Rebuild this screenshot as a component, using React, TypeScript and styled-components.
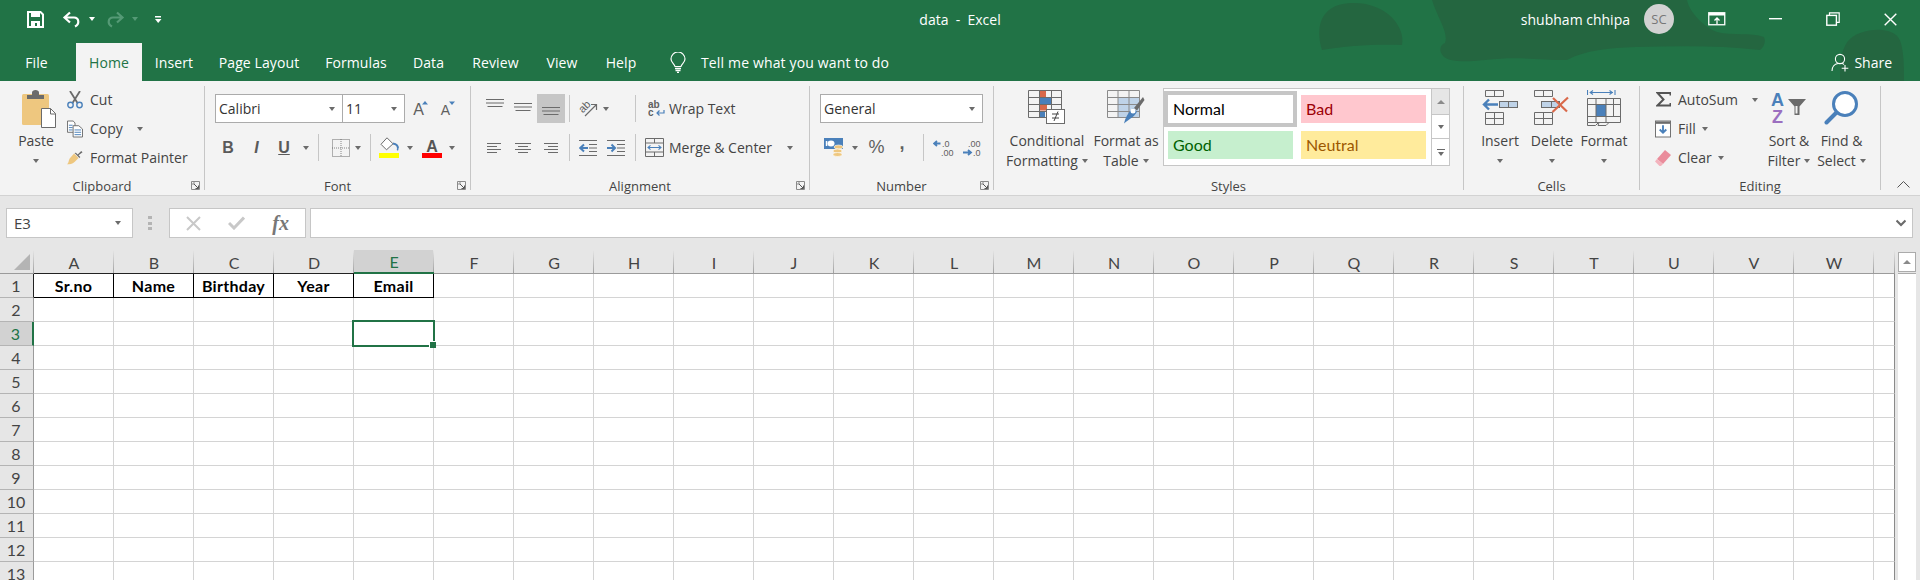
import React from 'react';
import styled, { createGlobalStyle } from 'styled-components';

const GlobalStyle = createGlobalStyle`
    html, body {
        margin: 0;
        padding: 0;
        height: 580px;
        overflow: hidden;
        background: #fff;
        font-family: "Open Sans", "Liberation Sans", sans-serif;
    }
    * { box-sizing: border-box; }
`

const GRAY = '#6b6b6b'
const BLUE = '#4a80ba'
const LIGHTBLUE = '#bfd3e8'
const TAN = '#eec77f'
const RED = '#d9694a'

const SaveIcon = () => (
    <svg width="17" height="17" viewBox="0 0 17 17">
        <path d="M1 1h12.5L16 3.5V16H1z" fill="none" stroke="#fff" strokeWidth="2" />
        <rect x="4" y="1" width="9" height="5" fill="#fff" />
        <path d="M4 16v-6h9v6h-3v-4H8v4z" fill="#fff" />
    </svg>
)
const UndoIcon = ({ color = '#fff', flip = false }: { color?: string; flip?: boolean }) => (
    <svg width="19" height="17" viewBox="0 0 19 17" style={flip ? { transform: 'scaleX(-1)' } : undefined}>
        <path d="M8 1.5L2.5 6.5 8 11.5M3 6.5h9c5 0 6 6.5 1 9" fill="none" stroke={color} strokeWidth="2.2" />
    </svg>
)
const QatIcon = () => (
    <svg width="7" height="9" viewBox="0 0 7 9">
        <rect width="6" height="1.5" y="1" fill="#fff" />
        <path d="M0 4h6.5L3.2 8z" fill="#fff" />
    </svg>
)
const DisplayIcon = () => (
    <svg width="18" height="14" viewBox="0 0 18 14">
        <rect x=".75" y=".75" width="16" height="12" fill="none" stroke="#fff" strokeWidth="1.3" />
        <rect x="1" y="1" width="16" height="2.5" fill="#fff" />
        <path d="M9 12V6M6.5 8.5L9 6l2.500 2.500" fill="none" stroke="#fff" strokeWidth="1.3" />
    </svg>
)
const MinIcon = () => (
    <svg width="13" height="2" viewBox="0 0 13 2"><rect width="13" height="1.4" fill="#fff" /></svg>
)
const RestoreIcon = () => (
    <svg width="14" height="14" viewBox="0 0 14 14">
        <path d="M3.500 3V.8h9.700v9.600H11" fill="none" stroke="#fff" strokeWidth="1.2" />
        <rect x=".8" y="3.400" width="9.600" height="9.800" fill="none" stroke="#fff" strokeWidth="1.4" />
    </svg>
)
const CloseIcon = () => (
    <svg width="13" height="13" viewBox="0 0 13 13">
        <path d="M.7.700l11.600 11.600M12.300.7L.7 12.300" stroke="#fff" strokeWidth="1.4" />
    </svg>
)
const BulbIcon = () => (
    <svg width="16" height="21" viewBox="0 0 16 21">
        <path d="M5 14.500C4.500 12 1 10.500 1 7a7 7 0 0 1 14 0c0 3.500-3.500 5-4 7.500z" fill="none" stroke="#fff" strokeWidth="1.2" />
        <path d="M5 16.500h6M5.500 18.500h5M7 20.300h2" stroke="#fff" strokeWidth="1.300" />
    </svg>
)
const ShareIcon = () => (
    <svg width="19" height="19" viewBox="0 0 19 19">
        <circle cx="9" cy="6" r="4.600" fill="none" stroke="#fff" strokeWidth="1.100" />
        <path d="M1 18c0-4 2.500-7 6-7.500M11 10.500c.8.200 1.500.5 2 1" fill="none" stroke="#fff" strokeWidth="1.100" />
        <path d="M14 12v6.500M10.700 15.300h6.600" stroke="#fff" strokeWidth="1.100" />
    </svg>
)
const PasteIcon = () => (
    <svg width="34" height="38" viewBox="0 0 34 38">
        <rect x="0" y="4" width="27" height="31" rx="1.500" fill={TAN} />
        <path d="M5 9V5h5V2.500C10 1 11.500 0 13.500 0S17 1 17 2.500V5h5v4z" fill={GRAY} />
        <path d="M19.500 18.500h9l5 5v14h-14z" fill="#fff" stroke={GRAY} strokeWidth="1" />
        <path d="M28.500 18.500V24H33.500" fill="none" stroke={GRAY} />
    </svg>
)
const CutIcon = () => (
    <svg width="16" height="18" viewBox="0 0 16 18">
        <path d="M3 0l7.500 12M13 0L5.500 12" stroke={GRAY} strokeWidth="1.800" />
        <circle cx="3.500" cy="14" r="2.700" fill="none" stroke={BLUE} strokeWidth="1.400" />
        <circle cx="12.500" cy="14" r="2.700" fill="none" stroke={BLUE} strokeWidth="1.400" />
    </svg>
)
const CopyIcon = () => (
    <svg width="17" height="18" viewBox="0 0 17 18">
        <path d="M.5.500h6l2 2v10H.5z" fill="#fff" stroke={GRAY} />
        <path d="M2 5h4M2 7.500h4M2 10h4" stroke={BLUE} />
        <path d="M6.500 5.500h6l4 3.500v8.500h-10z" fill="#fff" stroke={GRAY} />
        <path d="M8 10h7M8 12.500h7M8 15h7" stroke={BLUE} />
    </svg>
)
const BrushIcon = () => (
    <svg width="18" height="16" viewBox="0 0 18 16">
        <path d="M8 3l5 5-4.500 4.500C6 15 3 15 0 15c2-1 1.500-4 3-6.500z" fill={TAN} />
        <path d="M8.500 2.500l5.500 5.500 1-1-2-2.200L17.500 1.500 16 0l-4 4-2-2z" fill={GRAY} />
    </svg>
)
const BorderIcon = () => (
    <svg width="18" height="18" viewBox="0 0 18 18">
        <rect x=".5" y=".5" width="17" height="17" fill="none" stroke={GRAY} strokeDasharray="1 1" />
        <path d="M9 0v18M0 9h18" stroke={GRAY} strokeDasharray="1 1" opacity=".8" />
    </svg>
)
const FillIcon = () => (
    <svg width="21" height="21" viewBox="0 0 21 21">
        <path d="M8 .8l-6 6.500 5.500 5.500 6.500-6z" fill="#fff" stroke={GRAY} />
        <path d="M14 6.500c3 .5 5 2 5 5" fill="none" stroke={BLUE} strokeWidth="2" />
        <path d="M18.500 10.500c1 1.200 1.200 2.500.500 3-1 .3-1.500-.8-1-2z" fill={BLUE} />
        <rect y="16" width="20" height="5" fill="#ffff00" />
    </svg>
)
const FontColorIcon = () => (
    <svg width="20" height="21" viewBox="0 0 20 21">
        <text x="10" y="15" textAnchor="middle" fontFamily="Liberation Sans, sans-serif" fontWeight="700" fontSize="16" fill="#555">A</text>
        <rect y="16" width="20" height="5" fill="#ff0000" />
    </svg>
)
const GrowFontIcon = ({ up }: { up: boolean }) => (
    <svg width="16" height="20" viewBox="0 0 16 20">
        <text x="6.500" y="16" textAnchor="middle" fontFamily="Liberation Sans, sans-serif" fontSize={up ? 16 : 14} fill="#5f5f5f">A</text>
        <path d={up ? 'M10 5.500L13 2l3 3.500z' : 'M10 2.500h6l-3 3.500z'} fill={BLUE} />
    </svg>
)
const AlignV = ({ top }: { top: number }) => (
    <svg width="18" height="24" viewBox="0 0 18 24">
        <path d={`M0 ${top}h18M0 ${top + 3.5}h18M1.500 ${top + 7}h15`} stroke={GRAY} strokeWidth="1" />
    </svg>
)
const AlignH = ({ mode }: { mode: 'l' | 'c' | 'r' }) => {
    const s = mode === 'l' ? ['M0 1.500h14', 'M0 4.500h10', 'M0 7.500h14', 'M0 10.500h10'] : mode === 'c' ? ['M0 1.500h16', 'M3 4.500h10', 'M0 7.500h16', 'M3 10.500h10'] : ['M1 1.500h14', 'M5 4.500h10', 'M1 7.500h14', 'M5 10.500h10']
    return (
        <svg width="16" height="12" viewBox="0 0 16 12"><path d={s.join('')} stroke={GRAY} /></svg>
    )
}
const OrientIcon = () => (
    <svg width="20" height="20" viewBox="0 0 20 20">
        <text x="7" y="11" fontFamily="Liberation Sans, sans-serif" fontSize="11" fill="#5f5f5f" transform="rotate(-45 7 8)" textAnchor="middle">ab</text>
        <path d="M7 17L18 6M13 5.500h5.500V11" fill="none" stroke={GRAY} strokeWidth="1.200" />
    </svg>
)
const IndentIcon = ({ flip }: { flip: boolean }) => (
    <svg width="18" height="16" viewBox="0 0 18 16">
        <path d="M0 .5h18M10 4.500h8M10 8h8M10 11.500h8M0 15.500h18" stroke={GRAY} />
        <path d={flip ? 'M9 8H1M5 4.500L1.200 8 5 11.500' : 'M0 8h8M4.500 4.500L8 8l-3.500 3.500'} fill="none" stroke={BLUE} strokeWidth="2" />
    </svg>
)
const WrapIcon = () => (
    <svg width="17" height="20" viewBox="0 0 17 20">
        <text x="0" y="9" fontFamily="Liberation Sans, sans-serif" fontSize="10" fontWeight="700" fill="#5f5f5f">ab</text>
        <text x="0" y="17" fontFamily="Liberation Sans, sans-serif" fontSize="10" fontWeight="700" fill="#5f5f5f">c</text>
        <path d="M16 11v3H9M11.500 11.500L9 14l2.500 2.500" fill="none" stroke={BLUE} strokeWidth="1.200" />
    </svg>
)
const MergeIcon = () => (
    <svg width="19" height="19" viewBox="0 0 19 19">
        <path d="M.5.500h18v18H.5zM.5 5h18M.5 14h18M9.500.5V5M9.500 14v4.500" fill="none" stroke={GRAY} />
        <path d="M3 9.500h13M5.500 7.300L3 9.500l2.500 2.200M13.500 7.300l2.500 2.200-2.500 2.200" fill="none" stroke={BLUE} strokeWidth="1.100" />
    </svg>
)
const AccountingIcon = () => (
    <svg width="20" height="19" viewBox="0 0 20 19">
        <rect y="0" width="19" height="11" fill={BLUE} />
        <ellipse cx="7" cy="5.500" rx="3.500" ry="3" fill="#fff" />
        <rect x="1.800" y="3" width="1.500" height="5" fill="#fff" />
        <ellipse cx="14.500" cy="9" rx="4.500" ry="2" fill={TAN} stroke="#fff" strokeWidth=".6" />
        <ellipse cx="13.500" cy="13" rx="4.500" ry="2" fill={TAN} stroke="#fff" strokeWidth=".6" />
        <ellipse cx="13.500" cy="16.500" rx="4.500" ry="2" fill={TAN} stroke="#fff" strokeWidth=".6" />
    </svg>
)
const DecimalIcon = ({ more }: { more: boolean }) => (
    <svg width="23" height="20" viewBox="0 0 23 20" fontFamily="Liberation Sans, sans-serif" fontSize="9" fill="#5f5f5f">
        {more ? (
            <>
                <text x="9" y="8.500">.0</text>
                <text x="8" y="17.500">.00</text>
                <path d="M7.500 5.500H1.500M4 3L1 5.500 4 8" fill="none" stroke={BLUE} strokeWidth="1.800" />
            </>
        ) : (
            <>
                <text x="7" y="8.500">.00</text>
                <text x="12" y="17.500">.0</text>
                <path d="M2 14.500h8M7 12l3 2.500-3 2.500" fill="none" stroke={BLUE} strokeWidth="1.800" />
            </>
        )}
    </svg>
)
const CondIcon = () => (
    <svg width="38" height="34" viewBox="0 0 38 34">
        <rect x="11" y="1" width="7" height="6" fill={RED} />
        <rect x="11" y="8" width="12" height="6" fill={BLUE} />
        <rect x="11" y="15" width="8" height="5.500" fill={RED} />
        <rect x="11" y="22" width="6" height="5" fill={BLUE} />
        <path d="M.5.500h33v27H.5zM.5 7.500h33M.5 14.500h33M.5 21.500h33M11.500.5v27M23.500.5v27" fill="none" stroke={GRAY} strokeWidth="1" />
        <rect x="18.500" y="19.500" width="18" height="14" fill="#fff" stroke={GRAY} />
        <path d="M24 24h7M24 28h7M30 21.500l-4 9.500" stroke="#444" fill="none" />
    </svg>
)
const FmtTableIcon = () => (
    <svg width="38" height="34" viewBox="0 0 38 34">
        <rect x="11" y="7" width="22" height="21" fill={LIGHTBLUE} />
        <path d="M.5.500h32v27H.5zM.5 7.500h32M.5 14.500h32M.5 21.500h32M11 .5v27M22 .5v27" fill="none" stroke="#8a8a8a" />
        <path d="M36 7L27 18l3 2.500L37.500 10z" fill={GRAY} />
        <path d="M26 18l4 3.500c-2 5-7 7-13 12 1-5 4-11 9-15.500z" fill={BLUE} />
        <circle cx="26" cy="21" r="2.500" fill="#fff" />
    </svg>
)
const InsertIcon = () => (
    <svg width="37" height="36" viewBox="0 0 37 36">
        <path d="M3.500.5h18v6h-18zM12.500.5v6M3.500 22.500h18v12h-18zM3.500 28.500h18M12.500 22.500v12" fill="none" stroke={GRAY} />
        <rect x="17.500" y="11.500" width="18" height="6" fill={LIGHTBLUE} stroke={GRAY} />
        <path d="M26.500 11.500v6" stroke={GRAY} />
        <path d="M16 14.500H2M7 9.500l-5 5 5 5" fill="none" stroke={BLUE} strokeWidth="2.400" />
    </svg>
)
const DeleteIcon = () => (
    <svg width="37" height="36" viewBox="0 0 37 36">
        <path d="M.5.500h18v6H.5zM9.500.5v6M.5 22.500h18v12H.5zM.5 28.500h18M9.500 22.500v12" fill="none" stroke={GRAY} />
        <rect x="7.500" y="11.500" width="18" height="6" fill={LIGHTBLUE} stroke={GRAY} />
        <path d="M17.500 11.500v6" stroke={GRAY} />
        <path d="M19 8l14 13.500M34 7.500L18.500 22" stroke={RED} strokeWidth="2.200" />
    </svg>
)
const FormatCellIcon = () => (
    <svg width="35" height="38" viewBox="0 0 35 38">
        <path d="M.5 0v5M28 0v5M3 2.500h23M6 .5l-2.800 2 2.800 2M22.500.5l2.800 2-2.800 2" fill="none" stroke={BLUE} strokeWidth="1.100" />
        <rect x="9" y="15" width="10" height="11" fill={BLUE} />
        <path d="M.5 8.500h33v24H.5zM.5 14.500h33M.5 26.500h33M9 8.500v24M19 8.500v24M26.500 8.500v18" fill="none" stroke={GRAY} />
        <path d="M.5 32.500v3h8l3-3M12 32.500l-1 3h8l3-3" fill="none" stroke={GRAY} />
    </svg>
)
const SigmaIcon = () => (
    <svg width="15" height="15" viewBox="0 0 15 15">
        <path d="M14.500 3.500V1H1.500l6 6.500-6 6h13v-2.500" fill="none" stroke="#555" strokeWidth="2" />
    </svg>
)
const FillDownIcon = () => (
    <svg width="17" height="18" viewBox="0 0 17 18">
        <rect x=".5" y=".5" width="16" height="17" fill="#fff" stroke={GRAY} />
        <rect x="1" y="1" width="15" height="2.500" fill={GRAY} />
        <path d="M8.500 5v8M5 9.500l3.500 3.500L12 9.500" fill="none" stroke={BLUE} strokeWidth="2" />
    </svg>
)
const EraserIcon = () => (
    <svg width="16" height="16" viewBox="0 0 16 16">
        <path d="M10 0l6 5-8 9-6-5z" fill="#ea8c9b" />
        <path d="M2 9l6 5-2 2-1.500 0L0 11.500z" fill="#f3b3bd" />
    </svg>
)
const SortIcon = () => (
    <svg width="36" height="37" viewBox="0 0 36 37" fontFamily="Liberation Sans, sans-serif" fontWeight="700" fontSize="18">
        <text x="0" y="16.300" fill={BLUE}>A</text>
        <text x="1" y="33" fill="#9b6fc0">Z</text>
        <path d="M17 9h18l-6.500 7.500V25h-5v-8.500z" fill={GRAY} />
        <path d="M24.500 16v7.500h2V16z" fill="#f3f3f3" />
    </svg>
)
const FindIcon = () => (
    <svg width="35" height="35" viewBox="0 0 35 35">
        <circle cx="21" cy="14" r="11.500" fill="#fff" stroke={BLUE} strokeWidth="3" />
        <path d="M12.500 22.500L2.500 32.500" stroke={BLUE} strokeWidth="4" strokeLinecap="round" />
    </svg>
)
const LauncherIcon = () => (
    <svg width="9" height="9" viewBox="0 0 9 9">
        <path d="M.5 8.500V.5h8v8zM.5 3h2.500M3 .5V3" fill="none" stroke="#8a8a8a" />
        <path d="M3 3l4.500 4.500M7.500 4.500v3h-3" fill="none" stroke="#555" />
    </svg>
)
const XIcon = () => (
    <svg width="15" height="15" viewBox="0 0 15 15"><path d="M1 1l13 13M14 1L1 14" stroke="#c8c8c8" strokeWidth="2" /></svg>
)
const CheckIcon = () => (
    <svg width="17" height="14" viewBox="0 0 17 14"><path d="M1 7l5 5L16 1.500" fill="none" stroke="#c8c8c8" strokeWidth="3" /></svg>
)
const ChevronIcon = ({ up, color = GRAY }: { up?: boolean; color?: string }) => (
    <svg width={up ? 13 : 10} height="8" viewBox={up ? '0 0 13 8' : '0 0 10 8'}>
        <path d={up ? 'M.5 7.500l6-6 6 6' : 'M.5 1.500L5 6l4.500-4.500'} fill="none" stroke={color} strokeWidth={up ? 1 : 2.200} />
    </svg>
)
const CornerIcon = () => (
    <svg width="16" height="16" viewBox="0 0 16 16"><path d="M16 0v16H0z" fill="#b4b4b4" /></svg>
)

const TitleBlobs = () => (
    <BlobLayer width="720" height="81" viewBox="0 0 720 81">
        <path d="M122 50c-6-20-4-45 28-47 36-2 56 24 52 42-22-1-54 0-80 5z" fill="#246640" />
        <path d="M232 0h255c2 12 18 28 30 32 16 4 34 0 47 5 2 5 0 10-4 13-42-5-82-4-124-3-28 1-50 3-69 13-28 0-50-4-82 0-20 2-34 2-41-3-6-6-4-12 1-14 4-10-8-26-13-43z" fill="#246640" />
        <path d="M640 81c0-14 0-30 8-40 10-12 40-16 50-4 6 8 6 30 6 44z" fill="#246640" />
    </BlobLayer>
)

const Caret = () => <CaretShape />

const SmallButton = ({ icon, label, w, caretGap }: { icon: React.ReactNode; label: string; w: number; caretGap?: number }) => (
    <SmallRow>
        <Slot $w={w}>{icon}</Slot>
        <SmallLabel>{label}</SmallLabel>
        {caretGap !== undefined && <Slot $w={8} $ml={caretGap}><Caret /></Slot>}
    </SmallRow>
)

const BigButton = ({ w, icon, lines, dx = 0 }: { w: number; icon: React.ReactNode; lines: [string, string?]; dx?: number }) => (
    <BigWrap $w={w}>
        <BigIcon $dx={dx}>{icon}</BigIcon>
        <BigLine>{lines[0]}</BigLine>
        <BigLine>
            {lines[1]}
            <BigCaret $gap={lines[1] ? 4 : 0}><Caret /></BigCaret>
        </BigLine>
    </BigWrap>
)

const Group = ({ w, label, launcher, children }: { w: number; label: string; launcher?: boolean; children: React.ReactNode }) => (
    <GroupBox $w={w}>
        <GroupBody>{children}</GroupBody>
        <GroupFooter>
            {label}
            {launcher && <Launcher><LauncherIcon /></Launcher>}
        </GroupFooter>
    </GroupBox>
)

const COLS = 'ABCDEFGHIJKLMNOPQRSTUVW'.split('')
const HEADERS = ['Sr.no', 'Name', 'Birthday', 'Year', 'Email']
const ROWS = Array.from({ length: 13 }, (_, i) => i + 1)

const App = () => {
    return (
        <Page>
            <GlobalStyle />
            <TopGreen>
                <TitleBlobs />
                <TitleBar>
                    <Qat>
                        <Slot $w={17}><SaveIcon /></Slot>
                        <Slot $w={19} $ml={18}><UndoIcon /></Slot>
                        <Slot $w={8} $ml={7}><CaretShape $white /></Slot>
                        <Slot $w={19} $ml={10}><UndoIcon color="#559a76" flip /></Slot>
                        <Slot $w={8} $ml={6}><CaretShape $faded /></Slot>
                        <Slot $w={7} $ml={16}><QatIcon /></Slot>
                    </Qat>
                    <WindowTitle>data&nbsp; -&nbsp; Excel</WindowTitle>
                    <TitleRight>
                        <UserName>shubham chhipa</UserName>
                        <Avatar>SC</Avatar>
                        <Slot $w={18} $ml={34}><DisplayIcon /></Slot>
                        <Slot $w={13} $ml={43}><MinIcon /></Slot>
                        <Slot $w={14} $ml={44}><RestoreIcon /></Slot>
                        <Slot $w={13} $ml={44}><CloseIcon /></Slot>
                    </TitleRight>
                </TitleBar>
                <TabBar>
                    <Tabs>
                        <Tab $w={76} $pr={3}>File</Tab>
                        <Tab $w={66} $active>Home</Tab>
                        <Tab $w={64}>Insert</Tab>
                        <Tab $w={106}>Page Layout</Tab>
                        <Tab $w={88}>Formulas</Tab>
                        <Tab $w={57}>Data</Tab>
                        <Tab $w={77}>Review</Tab>
                        <Tab $w={56}>View</Tab>
                        <Tab $w={62}>Help</Tab>
                        <TellMe>
                            <BulbIcon />
                            <span>Tell me what you want to do</span>
                        </TellMe>
                    </Tabs>
                    <Share>
                        <ShareIcon />
                        <span>Share</span>
                    </Share>
                </TabBar>
            </TopGreen>

            <Ribbon>
                <Group w={205} label="Clipboard" launcher>
                    <Split>
                        <BigButton w={62} dx={5} icon={<PasteIcon />} lines={['Paste']} />
                        <SmallColumn $w={138}>
                            <SmallButton w={16} icon={<CutIcon />} label="Cut" />
                            <SmallButton w={16} icon={<CopyIcon />} label="Copy" caretGap={13} />
                            <SmallButton w={16} icon={<BrushIcon />} label="Format Painter" />
                        </SmallColumn>
                    </Split>
                </Group>

                <Group w={266} label="Font" launcher>
                    <ToolRows>
                        <ToolRow $pl={10}>
                            <ComboBox $w={128}><ComboText>Calibri</ComboText><Caret /></ComboBox>
                            <ComboBox $w={63} $ml={-1}><ComboText>11</ComboText><Caret /></ComboBox>
                            <Slot $w={16} $ml={7}><GrowFontIcon up /></Slot>
                            <Slot $w={16} $ml={11}><GrowFontIcon up={false} /></Slot>
                        </ToolRow>
                        <ToolRow $pl={9}>
                            <Slot $w={28}><Letter>B</Letter></Slot>
                            <Slot $w={29}><Letter $italic>I</Letter></Slot>
                            <Slot $w={26}><Letter $under>U</Letter></Slot>
                            <Slot $w={18}><Caret /></Slot>
                            <Sep $ml={3} />
                            <Slot $w={18} $ml={13}><BorderIcon /></Slot>
                            <Slot $w={8} $ml={4}><Caret /></Slot>
                            <Sep $ml={8} />
                            <Slot $w={21} $ml={8}><FillIcon /></Slot>
                            <Slot $w={8} $ml={6}><Caret /></Slot>
                            <Slot $w={20} $ml={8}><FontColorIcon /></Slot>
                            <Slot $w={8} $ml={6}><Caret /></Slot>
                        </ToolRow>
                    </ToolRows>
                </Group>

                <Group w={339} label="Alignment" launcher>
                    <ToolRows>
                        <ToolRow $pl={10}>
                            <Slot $w={28}><AlignV top={2.5} /></Slot>
                            <Slot $w={28}><AlignV top={6.5} /></Slot>
                            <Slot $w={28} $active><AlignV top={10.5} /></Slot>
                            <Sep $ml={4} />
                            <Slot $w={20} $ml={8}><OrientIcon /></Slot>
                            <Slot $w={8} $ml={4}><Caret /></Slot>
                            <Sep $ml={25} />
                            <Slot $w={17} $ml={12}><WrapIcon /></Slot>
                            <SmallLabel $ml={4}>Wrap Text</SmallLabel>
                        </ToolRow>
                        <ToolRow $pl={10}>
                            <Slot $w={28}><AlignH mode="l" /></Slot>
                            <Slot $w={28}><AlignH mode="c" /></Slot>
                            <Slot $w={28}><AlignH mode="r" /></Slot>
                            <Sep $ml={4} />
                            <Slot $w={18} $ml={9}><IndentIcon flip /></Slot>
                            <Slot $w={18} $ml={10}><IndentIcon flip={false} /></Slot>
                            <Sep $ml={10} />
                            <Slot $w={19} $ml={9}><MergeIcon /></Slot>
                            <SmallLabel $ml={5} $w={106}>Merge &amp; Center</SmallLabel>
                            <Slot $w={8} $ml={11}><Caret /></Slot>
                        </ToolRow>
                    </ToolRows>
                </Group>

                <Group w={184} label="Number" launcher>
                    <ToolRows>
                        <ToolRow $pl={10}>
                            <ComboBox $w={163}><ComboText>General</ComboText><Caret /></ComboBox>
                        </ToolRow>
                        <ToolRow $pl={14}>
                            <Slot $w={20}><AccountingIcon /></Slot>
                            <Slot $w={8} $ml={7}><Caret /></Slot>
                            <Slot $w={15} $ml={10}><Symbol>%</Symbol></Slot>
                            <Slot $w={16} $ml={10}><Symbol $comma>,</Symbol></Slot>
                            <Sep $ml={13} />
                            <Slot $w={23} $ml={9}><DecimalIcon more /></Slot>
                            <Slot $w={23} $ml={5}><DecimalIcon more={false} /></Slot>
                        </ToolRow>
                    </ToolRows>
                </Group>

                <Group w={470} label="Styles">
                    <Split $pl={6}>
                        <BigButton w={94} icon={<CondIcon />} lines={['Conditional', 'Formatting']} />
                        <BigButton w={64} icon={<FmtTableIcon />} lines={['Format as', 'Table']} />
                        <Gallery>
                            <StyleGrid>
                                <StyleCell $bg="#fff" $fg="#000" $selected>Normal</StyleCell>
                                <StyleCell $bg="#ffc7ce" $fg="#9c0006">Bad</StyleCell>
                                <StyleCell $bg="#c6efce" $fg="#006100">Good</StyleCell>
                                <StyleCell $bg="#ffeb9c" $fg="#9c5700">Neutral</StyleCell>
                            </StyleGrid>
                            <GalleryScroll>
                                <GalleryBtn $h={26} $disabled><UpTri /></GalleryBtn>
                                <GalleryBtn $h={24}><Caret /></GalleryBtn>
                                <GalleryBtn $h={26} $more><Caret /></GalleryBtn>
                            </GalleryScroll>
                        </Gallery>
                    </Split>
                </Group>

                <Group w={176} label="Cells">
                    <Split $pl={10}>
                        <BigButton w={52} icon={<InsertIcon />} lines={['Insert']} />
                        <BigButton w={52} icon={<DeleteIcon />} lines={['Delete']} />
                        <BigButton w={52} icon={<FormatCellIcon />} lines={['Format']} />
                    </Split>
                </Group>

                <Group w={241} label="Editing">
                    <Split $pl={15}>
                        <SmallColumn $w={108}>
                            <SmallButton w={16} icon={<SigmaIcon />} label="AutoSum" caretGap={13} />
                            <SmallRow>
                                <Slot $w={16}><FillDownIcon /></Slot>
                                <SmallLabel>Fill</SmallLabel>
                                <Slot $w={8} $ml={5}><Caret /></Slot>
                            </SmallRow>
                            <SmallRow>
                                <Slot $w={16}><EraserIcon /></Slot>
                                <SmallLabel>Clear</SmallLabel>
                                <Slot $w={8} $ml={5}><Caret /></Slot>
                            </SmallRow>
                        </SmallColumn>
                        <BigButton w={52} icon={<SortIcon />} lines={['Sort &', 'Filter']} />
                        <BigButton w={53} icon={<FindIcon />} lines={['Find &', 'Select']} />
                    </Split>
                </Group>
                <Collapse><ChevronIcon up color="#555" /></Collapse>
            </Ribbon>

            <FormulaBar>
                <NameBox><span>E3</span><Caret /></NameBox>
                <Grip><i /><i /><i /></Grip>
                <FormulaButtons>
                    <XIcon />
                    <CheckIcon />
                    <Fx>fx</Fx>
                </FormulaButtons>
                <FormulaInput><ChevronIcon /></FormulaInput>
            </FormulaBar>

            <SheetArea>
                <Grid>
                    <CornerCell><CornerIcon /></CornerCell>
                    {COLS.map((c, i) => (
                        <ColHead key={c} $selected={c === 'E'} $dark={i < 4}>{c}</ColHead>
                    ))}
                    <ColHead />
                    {ROWS.map(r => (
                        <React.Fragment key={r}>
                            <RowHead $selected={r === 3} $dark={r === 1}>{r}</RowHead>
                            {COLS.map((c, i) => (
                                <Cell key={c} $boxed={r === 1 && i < 5}>
                                    {r === 1 && HEADERS[i]}
                                    {r === 3 && c === 'E' && <Selection><Handle /></Selection>}
                                </Cell>
                            ))}
                            <Cell $last />
                        </React.Fragment>
                    ))}
                </Grid>
                <ScrollGutter>
                    <ScrollBar>
                        <ScrollUp><UpTri /></ScrollUp>
                        <ScrollThumb />
                    </ScrollBar>
                </ScrollGutter>
            </SheetArea>
        </Page>
    );
};

export default App;

const Page = styled.div`
    width: 1920px;
    height: 580px;
    overflow: hidden;
    color: #444;
    font-size: 14px;
`
const TopGreen = styled.div`
    position: relative;
    height: 81px;
    background: #217346;
    color: #fff;
`
const BlobLayer = styled.svg`
    position: absolute;
    top: 0;
    right: 0;
`
const TitleBar = styled.div`
    position: relative;
    height: 43px;
    display: grid;
    grid-template-columns: 1fr auto 1fr;
    align-items: center;
    padding-bottom: 5px;
`
const Qat = styled.div`
    display: flex;
    align-items: center;
    padding-left: 27px;
`
const WindowTitle = styled.div`
    font-size: 14px;
`
const TitleRight = styled.div`
    display: flex;
    align-items: center;
    justify-content: flex-end;
    padding-right: 23px;
`
const UserName = styled.div`
    font-size: 14px;
    margin-right: 14px;
`
const Avatar = styled.div`
    width: 30px;
    height: 30px;
    border-radius: 50%;
    background: #d2d2d2;
    color: #777;
    font-size: 13px;
    display: flex;
    align-items: center;
    justify-content: center;
`
const TabBar = styled.div`
    position: relative;
    height: 38px;
    display: flex;
    justify-content: space-between;
`
const Tabs = styled.div`
    display: flex;
`
const Tab = styled.div<{ $w: number; $pr?: number; $active?: boolean }>`
    width: ${p => p.$w}px;
    padding-right: ${p => p.$pr ?? 0}px;
    display: flex;
    align-items: center;
    justify-content: center;
    font-size: 14px;
    letter-spacing: 0.1px;
    background: ${p => (p.$active ? '#f3f3f3' : 'transparent')};
    color: ${p => (p.$active ? '#217346' : '#fff')};
`
const TellMe = styled.div`
    display: flex;
    align-items: center;
    gap: 15px;
    margin-left: 18px;
    font-size: 14px;
    letter-spacing: 0.15px;
`
const Share = styled.div`
    display: flex;
    align-items: center;
    gap: 4px;
    padding-right: 28px;
    font-size: 14px;
`
const Ribbon = styled.div`
    position: relative;
    height: 114px;
    padding-top: 5px;
    display: flex;
    background: #f3f3f3;
`
const GroupBox = styled.div<{ $w: number }>`
    width: ${p => p.$w}px;
    height: 104px;
    border-right: 1px solid #c6c6c6;
    display: flex;
    flex-direction: column;
    flex: none;
`
const GroupBody = styled.div`
    height: 90px;
`
const GroupFooter = styled.div`
    position: relative;
    height: 14px;
    line-height: 20px;
    text-align: center;
    font-size: 13px;
    color: #444;
`
const Launcher = styled.span`
    position: absolute;
    right: 4px;
    top: 5px;
    line-height: 0;
`
const Split = styled.div<{ $pl?: number }>`
    display: flex;
    padding-left: ${p => p.$pl ?? 5}px;
`
const SmallColumn = styled.div<{ $w: number }>`
    width: ${p => p.$w}px;
    margin-top: -1px;
    display: flex;
    flex-direction: column;
`
const SmallRow = styled.div`
    height: 29px;
    display: flex;
    align-items: center;
`
const SmallLabel = styled.span<{ $ml?: number; $w?: number }>`
    margin-left: ${p => p.$ml ?? 7}px;
    ${p => (p.$w ? `width: ${p.$w}px;` : '')}
    font-size: 14px;
    white-space: nowrap;
`
const Slot = styled.span<{ $w: number; $ml?: number; $active?: boolean }>`
    width: ${p => p.$w}px;
    height: 29px;
    margin-left: ${p => p.$ml ?? 0}px;
    flex: none;
    display: flex;
    align-items: center;
    justify-content: center;
    background: ${p => (p.$active ? '#c6c6c6' : 'transparent')};
`
const CaretShape = styled.span<{ $white?: boolean; $faded?: boolean }>`
    display: inline-block;
    width: 0;
    height: 0;
    flex: none;
    border-left: 3.5px solid transparent;
    border-right: 3.5px solid transparent;
    border-top: 4px solid ${p => (p.$white ? '#fff' : p.$faded ? '#559a76' : '#6b6b6b')};
`
const UpTri = styled.span`
    display: inline-block;
    width: 0;
    height: 0;
    border-left: 4px solid transparent;
    border-right: 4px solid transparent;
    border-bottom: 4px solid #8a8a8a;
`
const BigWrap = styled.div<{ $w: number }>`
    width: ${p => p.$w}px;
    flex: none;
    display: flex;
    flex-direction: column;
    align-items: center;
`
const BigIcon = styled.div<{ $dx: number }>`
    height: 45px;
    padding: 4px 0 0 ${p => p.$dx}px;
    display: flex;
    align-items: flex-start;
    justify-content: center;
`
const BigLine = styled.div`
    height: 20px;
    line-height: 20px;
    font-size: 14px;
    white-space: nowrap;
    display: flex;
    align-items: center;
`
const BigCaret = styled.span<{ $gap: number }>`
    display: flex;
    margin-left: ${p => p.$gap}px;
`
const ToolRows = styled.div`
    padding-top: 8px;
    display: flex;
    flex-direction: column;
    gap: 10px;
`
const ToolRow = styled.div<{ $pl: number }>`
    height: 29px;
    padding-left: ${p => p.$pl}px;
    display: flex;
    align-items: center;
`
const ComboBox = styled.div<{ $w: number; $ml?: number }>`
    width: ${p => p.$w}px;
    height: 29px;
    margin-left: ${p => p.$ml ?? 0}px;
    padding: 0 7px 0 3px;
    background: #fff;
    border: 1px solid #ababab;
    display: flex;
    align-items: center;
    justify-content: space-between;
    flex: none;
`
const ComboText = styled.span`
    font-size: 14px;
    color: #333;
`
const Letter = styled.span<{ $italic?: boolean; $under?: boolean }>`
    font-family: "Liberation Sans", sans-serif;
    font-weight: 700;
    font-size: 16px;
    color: #5a5a5a;
    font-style: ${p => (p.$italic ? 'italic' : 'normal')};
    text-decoration: ${p => (p.$under ? 'underline' : 'none')};
`
const Symbol = styled.span<{ $comma?: boolean }>`
    font-family: "Liberation Sans", sans-serif;
    font-size: 18px;
    font-weight: ${p => (p.$comma ? 700 : 400)};
    color: #5f5f5f;
    ${p => (p.$comma ? 'margin-top: -8px;' : '')}
`
const Sep = styled.span<{ $ml: number }>`
    width: 1px;
    height: 27px;
    flex: none;
    margin-left: ${p => p.$ml}px;
    background: #c6c6c6;
`
const Gallery = styled.div`
    width: 287px;
    height: 78px;
    margin: 2px 0 0 5px;
    background: #fff;
    border: 1px solid #c6c6c6;
    display: flex;
    justify-content: space-between;
    flex: none;
`
const StyleGrid = styled.div`
    padding: 6px 0 0 4px;
    display: grid;
    grid-template-columns: 125px 125px;
    grid-auto-rows: 28px;
    gap: 8px;
`
const StyleCell = styled.div<{ $bg: string; $fg: string; $selected?: boolean }>`
    background: ${p => p.$bg};
    color: ${p => p.$fg};
    padding-left: 5px;
    line-height: 28px;
    font-family: Lato, sans-serif;
    font-size: 16px;
    ${p => (p.$selected ? 'outline: 4px solid #c6c6c6;' : '')}
`
const GalleryScroll = styled.div`
    width: 18px;
    border-left: 1px solid #c6c6c6;
    display: flex;
    flex-direction: column;
`
const GalleryBtn = styled.div<{ $h: number; $disabled?: boolean; $more?: boolean }>`
    height: ${p => p.$h}px;
    display: flex;
    align-items: center;
    justify-content: center;
    flex-direction: column;
    gap: 2px;
    background: ${p => (p.$disabled ? '#e6e6e6' : '#fff')};
    border-bottom: 1px solid #c6c6c6;
    &:last-child { border-bottom: 0; }
    ${p => (p.$more ? `&::before { content: ""; width: 8px; height: 1px; background: #6b6b6b; }` : '')}
`
const Collapse = styled.div`
    flex: 1;
    display: flex;
    justify-content: center;
    align-items: flex-end;
    padding: 0 0 2px 6px;
    height: 104px;
`
const FormulaBar = styled.div`
    height: 55px;
    padding-top: 12px;
    border-top: 1px solid #d2d2d2;
    background: #e6e6e6;
    display: flex;
    align-items: flex-start;
`
const NameBox = styled.div`
    width: 127px;
    height: 30px;
    margin-left: 6px;
    padding: 0 11px 0 7px;
    background: #fff;
    border: 1px solid #c6c6c6;
    display: flex;
    align-items: center;
    justify-content: space-between;
    font-size: 15px;
    color: #444;
`
const Grip = styled.div`
    width: 4px;
    height: 14px;
    margin: 8px 17px 0 15px;
    display: flex;
    flex-direction: column;
    justify-content: space-between;
    & > i {
        display: block;
        width: 4px;
        height: 3px;
        background: #b4b4b4;
    }
`
const FormulaButtons = styled.div`
    width: 137px;
    height: 30px;
    padding: 0 16px;
    background: #fff;
    border: 1px solid #c6c6c6;
    display: flex;
    align-items: center;
    justify-content: space-between;
`
const Fx = styled.span`
    font-family: "Liberation Serif", serif;
    font-style: italic;
    font-weight: 700;
    font-size: 20px;
    color: #777;
`
const FormulaInput = styled.div`
    width: 1603px;
    height: 30px;
    margin-left: 4px;
    padding-right: 6px;
    background: #fff;
    border: 1px solid #c6c6c6;
    display: flex;
    align-items: center;
    justify-content: flex-end;
`
const SheetArea = styled.div`
    height: 330px;
    display: flex;
    background: #e6e6e6;
`
const Grid = styled.div`
    display: grid;
    grid-template-columns: 34px repeat(23, 80px) 21px;
    grid-auto-rows: 24px;
    flex: none;
    width: 1895px;
    overflow: hidden;
`
const CornerCell = styled.div`
    background: linear-gradient(#e6e6e6, #a0a0a0) right / 1px 100% no-repeat, #e6e6e6;
    border-bottom: 1px solid #9b9b9b;
    padding: 4px 0 0 14px;
    line-height: 0;
`
const ColHead = styled.div<{ $selected?: boolean; $dark?: boolean }>`
    display: flex;
    align-items: center;
    justify-content: center;
    font-family: Lato, sans-serif;
    font-size: 16px;
    padding-top: 1px;
    background: linear-gradient(#e6e6e6, #a0a0a0) right / 1px 100% no-repeat, ${p => (p.$selected ? '#d2d2d2' : '#e6e6e6')};
    color: ${p => (p.$selected ? '#217346' : '#444')};
    border-bottom: ${p => (p.$selected ? '2px solid #217346' : p.$dark ? '1px solid #222' : '1px solid #9b9b9b')};
`
const RowHead = styled.div<{ $selected?: boolean; $dark?: boolean }>`
    display: flex;
    align-items: center;
    justify-content: center;
    padding-right: 1px;
    font-family: Lato, sans-serif;
    font-size: 16px;
    background: ${p => (p.$selected ? '#d2d2d2' : '#e6e6e6')};
    color: ${p => (p.$selected ? '#217346' : '#444')};
    border-bottom: 1px solid #b4b4b4;
    border-right: ${p => (p.$selected ? '2px solid #217346' : p.$dark ? '1px solid #222' : '1px solid #9b9b9b')};
`
const Cell = styled.div<{ $boxed?: boolean; $last?: boolean }>`
    position: relative;
    background: #fff;
    display: flex;
    align-items: center;
    justify-content: center;
    font-family: Lato, sans-serif;
    font-weight: 700;
    font-size: 16px;
    letter-spacing: 0.3px;
    color: #000;
    border-right: 1px solid ${p => (p.$boxed ? '#000' : p.$last ? '#8a8a8a' : '#d4d4d4')};
    border-bottom: 1px solid ${p => (p.$boxed ? '#000' : '#d4d4d4')};
`
const Selection = styled.div`
    position: absolute;
    top: -2px;
    left: -2px;
    right: -2px;
    bottom: -2px;
    border: 2px solid #217346;
    z-index: 2;
`
const Handle = styled.div`
    position: absolute;
    right: -3px;
    bottom: -3px;
    width: 6px;
    height: 6px;
    background: #217346;
    box-shadow: -1px -1px 0 #fff;
`
const ScrollGutter = styled.div`
    flex: 1;
    padding-left: 3px;
    padding-right: 4px;
`
const ScrollBar = styled.div`
    height: 100%;
    padding-top: 2px;
    display: flex;
    flex-direction: column;
`
const ScrollUp = styled.div`
    height: 20px;
    background: #fff;
    border: 1px solid #ababab;
    display: flex;
    align-items: center;
    justify-content: center;
`
const ScrollThumb = styled.div`
    flex: 1;
    margin-top: 1px;
    background: #fff;
    border-top: 1px solid #ababab;
`
